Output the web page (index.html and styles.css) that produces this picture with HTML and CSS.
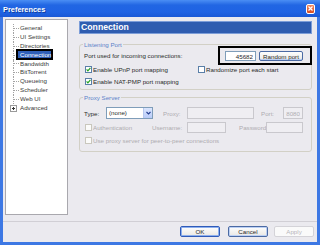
FILE: index.html
```html
<!DOCTYPE html>
<html lang="en">
<head>
    <meta charset="UTF-8">
    <meta name="viewport" content="width=device-width, initial-scale=1.0">
    <title>Preferences</title>
    <link rel="stylesheet" href="styles.css">
</head>
<body>
<div class="window">
    <div class="titlebar">
        <span class="title">Preferences</span>
        <span class="close">
            <svg width="5" height="5" viewBox="0 0 5 5"><path d="M0.5 0.5L4.5 4.5M4.5 0.5L0.5 4.5" stroke="#fff" stroke-width="1.2"/></svg>
        </span>
    </div>
    <div class="frame">
        <div class="main">
            <div class="tree">
                <ul>
                    <li>General</li>
                    <li>UI Settings</li>
                    <li>Directories</li>
                    <li class="selected"><span>Connection</span></li>
                    <li>Bandwidth</li>
                    <li>BitTorrent</li>
                    <li>Queueing</li>
                    <li>Scheduler</li>
                    <li>Web UI</li>
                    <li class="branch">
                        <svg class="plus" width="7" height="7" viewBox="0 0 7 7"><rect x="0.5" y="0.5" width="6" height="6" fill="#fff" stroke="#9a9a9a"/><path d="M2 3.5H5M3.5 2V5" stroke="#333" stroke-width="1"/></svg>Advanced
                    </li>
                </ul>
            </div>
            <div class="pane">
                <div class="pane-head">Connection</div>

                <div class="group group-listen">
                    <div class="group-title">Listening Port</div>
                    <div class="row row-port">
                        <span>Port used for incoming connections:</span>
                        <div class="port-box">
                            <input class="field port-input" type="text" value="45682">
                            <button class="btn random-btn">Random port</button>
                        </div>
                    </div>
                    <div class="row row-upnp">
                        <span class="check"><svg width="5" height="5" viewBox="0 0 5 5"><path d="M0.6 2.4L1.9 3.8L4.4 0.9" fill="none" stroke="#21a121" stroke-width="1.2"/></svg></span>
                        <span class="label upnp-label">Enable UPnP port mapping</span>
                        <span class="check"></span>
                        <span class="label">Randomize port each start</span>
                    </div>
                    <div class="row row-nat">
                        <span class="check"><svg width="5" height="5" viewBox="0 0 5 5"><path d="M0.6 2.4L1.9 3.8L4.4 0.9" fill="none" stroke="#21a121" stroke-width="1.2"/></svg></span>
                        <span class="label">Enable NAT-PMP port mapping</span>
                    </div>
                </div>

                <div class="group group-proxy">
                    <div class="group-title">Proxy Server</div>
                    <div class="row row-type">
                        <span class="type-label">Type:</span>
                        <div class="select">
                            <span class="select-text">(none)</span>
                            <span class="select-arrow"><svg width="5" height="4" viewBox="0 0 5 4"><path d="M0.5 1L2.5 3L4.5 1" fill="none" stroke="#243f8f" stroke-width="1.1"/></svg></span>
                        </div>
                        <span class="off proxy-label">Proxy:</span>
                        <input class="field field-off proxy-input" type="text" disabled>
                        <span class="off port-label">Port:</span>
                        <input class="field field-off small-port" type="text" value="8080" disabled>
                    </div>
                    <div class="row row-auth">
                        <span class="check check-off"></span>
                        <span class="off auth-label">Authentication</span>
                        <span class="off user-label">Username:</span>
                        <input class="field field-off user-input" type="text" disabled>
                        <span class="off pass-label">Password:</span>
                        <input class="field field-off pass-input" type="password" disabled>
                    </div>
                    <div class="row row-peer">
                        <span class="check check-off"></span>
                        <span class="off label">Use proxy server for peer-to-peer connections</span>
                    </div>
                </div>
            </div>
        </div>
        <div class="footer">
            <button class="btn btn-ok">OK</button>
            <button class="btn">Cancel</button>
            <button class="btn btn-disabled">Apply</button>
        </div>
    </div>
</div>
</body>
</html>
```

FILE: styles.css
```css
body {
    margin: 0;
    font-family: "Liberation Sans", Arial, sans-serif;
    font-size: 6.2px;
    color: #2a2a2a;
}
.window {
    width: 320px;
    height: 245px;
    display: flex;
    flex-direction: column;
    background-color: #ebeaef;
}

/* title bar */
.titlebar {
    height: 17px;
    flex: none;
    display: flex;
    align-items: center;
    justify-content: space-between;
    padding: 0 5px 0 3px;
    background: linear-gradient(#4a8ef4, #2166e3 30%, #1f63e4 70%, #1a58d6);
    color: #fff;
}
.title {
    font-weight: bold;
    font-size: 7.4px;
    padding-top: 1px;
    text-shadow: 1px 1px 0 #113c9c;
}
.close {
    width: 9px;
    height: 10px;
    box-sizing: border-box;
    background: linear-gradient(#ef8a62, #d9491f);
    border: 1px solid #fff;
    border-radius: 2px;
    display: flex;
    align-items: center;
    justify-content: center;
}

.frame {
    flex: 1;
    display: flex;
    flex-direction: column;
    border: 3px solid #3d78e4;
    border-top: 0;
}
.main {
    flex: 1;
    display: flex;
    padding: 2px 5px 0 2px;
}

/* tree on the left */
.tree {
    width: 63px;
    height: 196px;
    box-sizing: border-box;
    background: #fff;
    border: 1px solid #a9a8ae;
    padding-top: 4px;
}
.tree ul {
    list-style: none;
    margin: 0 0 0 7px;
    padding: 0;
}
.tree li {
    height: 8.9px;
    line-height: 8.9px;
    border-left: 1px dotted #a3a3a3;
    color: #3a3a3a;
    white-space: nowrap;
}
.tree li::before {
    content: "";
    display: inline-block;
    width: 5px;
    border-top: 1px dotted #a3a3a3;
    vertical-align: middle;
    margin-right: 1px;
}
.tree .selected span {
    margin-left: -4px;
    padding: 0 0 0 2px;
    border: 2px solid #000;
    background: #2f5fb8;
    color: #fff;
}
.tree .branch {
    border-left: 0;
    margin-left: -3px;
}
.tree .branch::before {
    display: none;
}
.plus {
    vertical-align: middle;
    margin-right: 3px;
}

/* right pane */
.pane {
    margin-left: 11px;
    width: 233px;
    padding-top: 2px;
}
.pane-head {
    height: 13px;
    box-sizing: border-box;
    background: #2f5db0;
    border: 1px solid #7c9dd8;
    color: #fff;
    font-weight: bold;
    font-size: 8.7px;
    line-height: 11px;
    padding-left: 1px;
}
.group {
    border: 1px solid #d2d0c6;
    border-radius: 3px;
    padding: 0 7px 0 4px;
}
.group-listen {
    margin-top: 10px;
    padding-bottom: 3px;
}
.group-proxy {
    margin-top: 7px;
    padding-bottom: 6px;
}
.group-title {
    display: table;
    margin: -4px 0 -2px -1px;
    padding: 0 1px;
    line-height: 7px;
    background: #ebeaef;
    color: #5a82c9;
}
.row {
    display: flex;
    align-items: center;
    white-space: nowrap;
}
.row-port {
    height: 19px;
    justify-content: space-between;
}
.row-upnp {
    height: 9px;
}
.row-nat {
    height: 10px;
    margin-top: 2px;
}
.row-type {
    height: 12px;
    margin-top: 8px;
}
.row-auth {
    height: 11px;
    margin-top: 3px;
}
.row-peer {
    height: 9px;
    margin-top: 3px;
}

.port-box {
    display: flex;
    align-items: center;
    gap: 3px;
    margin-right: -8px;
    padding: 3px 7px 2px 5px;
    border: 2px solid #000;
}

.check {
    width: 7px;
    height: 7px;
    box-sizing: border-box;
    flex: none;
    border: 1px solid #5a7fa8;
    background: #fff;
    margin-left: 1px;
    display: flex;
    align-items: center;
    justify-content: center;
}
.check-off {
    border-color: #c9c7bd;
    background: #fbfbfa;
}
.label {
    margin-left: 1px;
}
.upnp-label {
    width: 104px;
}
.off {
    color: #aeacb0;
}

/* text fields */
.field {
    font: inherit;
    margin: 0;
    padding: 0 2px;
    box-sizing: border-box;
    border: 1px solid #7f9db9;
    background: #fff;
    color: #2a2a2a;
    outline: none;
}
.field-off {
    border-color: #c9c8cd;
    background: #efeef2;
    color: #b0aeb3;
}
.port-input {
    width: 31px;
    height: 10px;
    text-align: right;
}
.type-label {
    width: 22px;
}
.select {
    width: 47px;
    height: 12px;
    box-sizing: border-box;
    display: flex;
    border: 1px solid #7f9db9;
    background: #fff;
}
.select-text {
    flex: 1;
    padding-left: 2px;
    line-height: 10px;
}
.select-arrow {
    width: 8px;
    background: linear-gradient(#dbe6fe, #b8cbf8);
    border-left: 1px solid #b6c8ef;
    display: flex;
    align-items: center;
    justify-content: center;
}
.proxy-label {
    margin-left: 10px;
    width: 24px;
}
.proxy-input {
    width: 67px;
    height: 12px;
}
.port-label {
    margin-left: 7px;
    width: 22px;
}
.small-port {
    width: 20px;
    height: 12px;
    text-align: right;
}
.auth-label {
    margin-left: 1px;
    width: 59px;
}
.user-label {
    width: 35px;
}
.user-input {
    width: 39px;
    height: 11px;
}
.pass-label {
    margin-left: 13px;
    width: 27px;
}
.pass-input {
    width: 37px;
    height: 11px;
}

/* buttons */
.btn {
    font: inherit;
    margin: 0;
    padding: 0;
    height: 10px;
    box-sizing: border-box;
    border: 1px solid #4b6aa3;
    border-radius: 2px;
    background: linear-gradient(#fefefe, #e9e8e4);
    color: #2a2a2a;
}
.random-btn {
    width: 44px;
    box-shadow: inset 0 -1px 0 #b9cdf3;
}
.footer {
    display: flex;
    justify-content: flex-end;
    gap: 6px;
    border-top: 1px solid #d1cfd5;
    padding: 4px 3px 5px 0;
}
.footer .btn {
    width: 40px;
    height: 11px;
    box-shadow: inset 0 0 0 1px #bcd0f4;
}
.footer .btn-ok {
    margin-right: 2px;
    border-color: #2f5bb8;
    box-shadow: inset 0 0 0 1px #8eb0ee;
}
.footer .btn-disabled {
    color: #b8b6bb;
    border-color: #d4d3d8;
    background: #fafafa;
    box-shadow: none;
}
```
